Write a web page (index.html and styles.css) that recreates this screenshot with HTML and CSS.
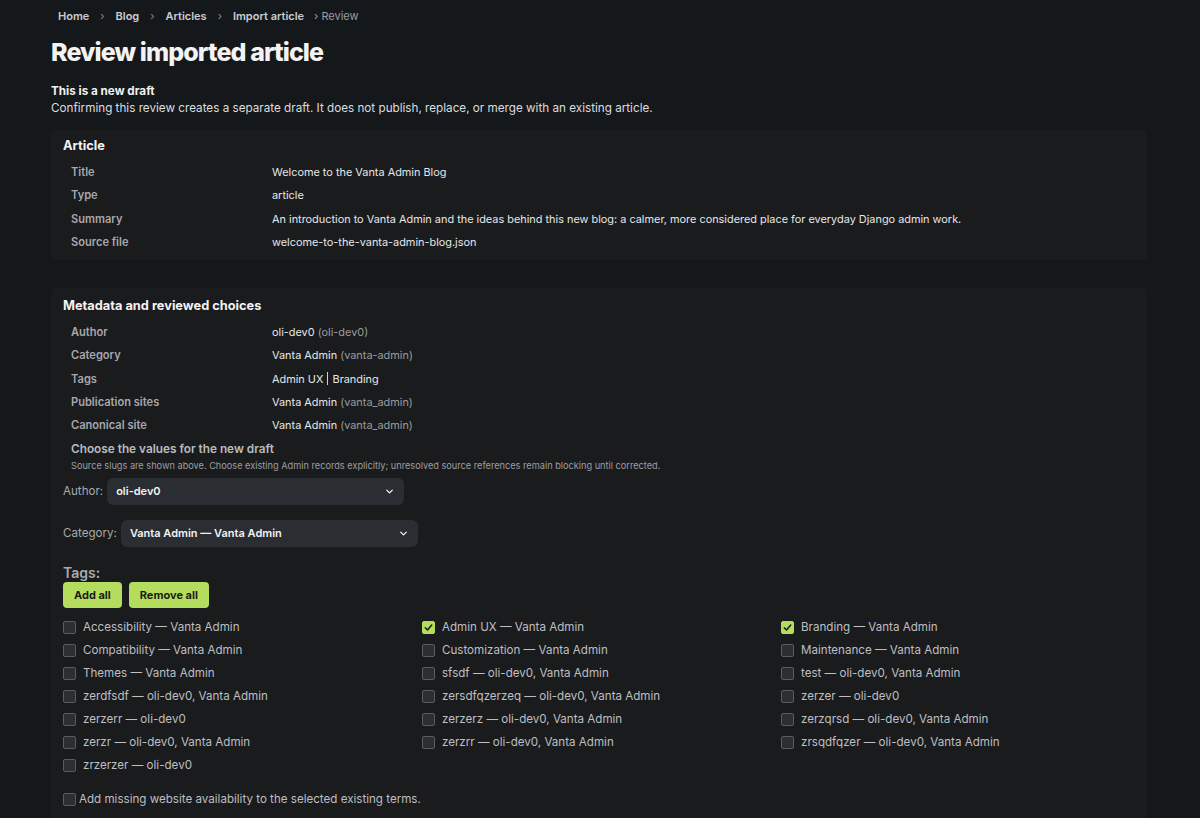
FILE: index.html
```html
<!DOCTYPE html>
<html lang="en">
<head>
<meta charset="utf-8">
<title>Review imported article</title>
<link rel="stylesheet" href="styles.css">
</head>
<body>
<nav class="crumbs">
  <a href="#">Home</a><span class="sep">›</span><a href="#">Blog</a><span class="sep">›</span><a href="#">Articles</a><span class="sep">›</span><a href="#">Import article</a><span class="current">› Review</span>
</nav>
<h1 class="title">Review imported article</h1>
<div class="notice">
  <p class="notice-head">This is a new draft</p>
  <p class="notice-text">Confirming this review creates a separate draft. It does not publish, replace, or merge with an existing article.</p>
</div>

<section class="panel">
  <h2 class="panel-head">Article</h2>
  <dl class="rows">
    <dt>Title</dt><dd>Welcome to the Vanta Admin Blog</dd>
    <dt>Type</dt><dd>article</dd>
    <dt>Summary</dt><dd>An introduction to Vanta Admin and the ideas behind this new blog: a calmer, more considered place for everyday Django admin work.</dd>
    <dt>Source file</dt><dd>welcome-to-the-vanta-admin-blog.json</dd>
  </dl>
</section>

<section class="panel panel-form">
  <h2 class="panel-head">Metadata and reviewed choices</h2>
  <dl class="rows">
    <dt>Author</dt><dd>oli-dev0 <span class="muted">(oli-dev0)</span></dd>
    <dt>Category</dt><dd>Vanta Admin <span class="muted">(vanta-admin)</span></dd>
    <dt>Tags</dt><dd>Admin UX <span class="bar"></span> Branding</dd>
    <dt>Publication sites</dt><dd>Vanta Admin <span class="muted">(vanta_admin)</span></dd>
    <dt>Canonical site</dt><dd>Vanta Admin <span class="muted">(vanta_admin)</span></dd>
  </dl>
  <div class="choose">
    <p class="choose-head">Choose the values for the new draft</p>
    <p class="choose-help">Source slugs are shown above. Choose existing Admin records explicitly; unresolved source references remain blocking until corrected.</p>
  </div>
  <div class="field">
    <label class="field-label">Author:</label>
    <div class="select"><span>oli-dev0</span><svg class="chev" viewBox="0 0 10 6" width="7" height="5"><path d="M1 1l4 4 4-4" fill="none" stroke="#fff" stroke-width="1.7" stroke-linecap="round" stroke-linejoin="round"/></svg></div>
  </div>
  <div class="field">
    <label class="field-label">Category:</label>
    <div class="select"><span>Vanta Admin — Vanta Admin</span><svg class="chev" viewBox="0 0 10 6" width="7" height="5"><path d="M1 1l4 4 4-4" fill="none" stroke="#fff" stroke-width="1.7" stroke-linecap="round" stroke-linejoin="round"/></svg></div>
  </div>
  <div class="tags">
    <p class="tags-label">Tags:</p>
    <div class="buttons">
      <button class="btn">Add all</button>
      <button class="btn">Remove all</button>
    </div>
    <ul class="checks">
      <li><span class="box"></span>Accessibility — Vanta Admin</li>
      <li><span class="box on"><svg viewBox="0 0 12 12" width="11" height="11"><path d="M2.5 6.3l2.4 2.4 4.6-5.4" fill="none" stroke="#1b1d17" stroke-width="1.7" stroke-linecap="round" stroke-linejoin="round"/></svg></span>Admin UX — Vanta Admin</li>
      <li><span class="box on"><svg viewBox="0 0 12 12" width="11" height="11"><path d="M2.5 6.3l2.4 2.4 4.6-5.4" fill="none" stroke="#1b1d17" stroke-width="1.7" stroke-linecap="round" stroke-linejoin="round"/></svg></span>Branding — Vanta Admin</li>
      <li><span class="box"></span>Compatibility — Vanta Admin</li>
      <li><span class="box"></span>Customization — Vanta Admin</li>
      <li><span class="box"></span>Maintenance — Vanta Admin</li>
      <li><span class="box"></span>Themes — Vanta Admin</li>
      <li><span class="box"></span>sfsdf — oli-dev0, Vanta Admin</li>
      <li><span class="box"></span>test — oli-dev0, Vanta Admin</li>
      <li><span class="box"></span>zerdfsdf — oli-dev0, Vanta Admin</li>
      <li><span class="box"></span>zersdfqzerzeq — oli-dev0, Vanta Admin</li>
      <li><span class="box"></span>zerzer — oli-dev0</li>
      <li><span class="box"></span>zerzerr — oli-dev0</li>
      <li><span class="box"></span>zerzerz — oli-dev0, Vanta Admin</li>
      <li><span class="box"></span>zerzqrsd — oli-dev0, Vanta Admin</li>
      <li><span class="box"></span>zerzr — oli-dev0, Vanta Admin</li>
      <li><span class="box"></span>zerzrr — oli-dev0, Vanta Admin</li>
      <li><span class="box"></span>zrsqdfqzer — oli-dev0, Vanta Admin</li>
      <li><span class="box"></span>zrzerzer — oli-dev0</li>
    </ul>
    <p class="missing"><span class="box"></span>Add missing website availability to the selected existing terms.</p>
  </div>
</section>
</body>
</html>
```

FILE: styles.css
```css
* { box-sizing: border-box; }
html, body { background: #15181b; }
body {
  margin: 0;
  padding: 0 53px 40px 51px;
  font-family: Inter, "Noto Sans", "Liberation Sans", sans-serif;
  color: #e4e5e6;
}
p, h1, h2, dl, dd, ul { margin: 0; padding: 0; }

.crumbs {
  padding: 8px 0 0 7px;
  font-size: 11px;
  line-height: 16px;
  font-weight: 600;
}
.crumbs a { color: #cbccce; text-decoration: none; }
.crumbs .sep { color: #8a8c8f; font-weight: 400; margin: 0 11px; }
.crumbs .current { color: #9a9c9f; font-weight: 400; margin-left: 10px; }

.title {
  margin-top: 12px;
  font-size: 25px;
  line-height: 32px;
  font-weight: 800;
  letter-spacing: -0.9px;
  color: #f3f3f3;
}

.notice { margin-top: 15px; }
.notice-head { font-size: 11.7px; line-height: 17px; font-weight: 700; color: #f0f0f0; }
.notice-text { font-size: 11.7px; line-height: 17px; color: #dcdddf; }

.panel {
  margin-top: 12px;
  background: #1a1b1d;
  border-radius: 4px;
  padding: 8px 12px 6px;
}
.panel-form { margin-top: 28px; padding-top: 9px; padding-bottom: 20px; }
.panel-head {
  font-size: 12.8px;
  line-height: 17px;
  font-weight: 700;
  color: #f2f2f2;
}
.panel-form .panel-head { line-height: 18px; }

.rows {
  margin-top: 7px;
  display: grid;
  grid-template-columns: 201px 1fr;
  padding-left: 8px;
}
.panel-form .rows { margin-top: 6px; }
.rows dt, .rows dd {
  font-size: 11px;
  line-height: 15px;
  padding: 4px 0 4.3px;
}
.rows dt { font-weight: 600; color: #a7a9ac; font-size: 11.1px; }
.rows dd { color: #e6e7e8; font-size: 10.9px; }
.muted { color: #9a9c9f; }
.bar {
  display: inline-block;
  width: 1px;
  height: 13px;
  background: #cfd0d2;
  vertical-align: -2px;
  margin: 0 1px;
}

.choose { padding-left: 8px; margin-top: 3px; }
.choose-head { font-size: 11.8px; line-height: 17px; font-weight: 600; color: #b9bbbe; }
.choose-help { margin-top: 1px; font-size: 9.2px; line-height: 13px; color: #9c9ea1; }

.field {
  display: flex;
  align-items: center;
  gap: 4px;
  margin-top: 6px;
}
.field + .field { margin-top: 15px; }
.field-label { font-size: 11.6px; color: #a8aaad; }
.select {
  width: 297px;
  height: 27px;
  background: #2a2d31;
  border-radius: 6px;
  display: flex;
  align-items: center;
  justify-content: space-between;
  padding: 0 11px 0 9px;
  font-size: 11px;
  font-weight: 600;
  color: #f2f2f2;
}
.chev { display: block; }

.tags { margin-top: 17px; }
.tags-label { font-size: 14px; line-height: 18px; font-weight: 600; color: #a9abae; }
.buttons { display: flex; gap: 7px; }
.btn {
  height: 26px;
  padding: 0 11px;
  border: none;
  border-radius: 4px;
  background: #b4dd5e;
  color: #1a1c16;
  font-family: inherit;
  font-size: 11px;
  font-weight: 700;
}

.checks {
  list-style: none;
  margin-top: 8px;
  display: grid;
  grid-template-columns: repeat(3, 359px);
}
.checks li {
  display: flex;
  align-items: center;
  height: 23px;
  font-size: 11.6px;
  color: #bdbfc2;
}
.box {
  flex: none;
  width: 13px;
  height: 13px;
  margin-right: 7px;
  border: 1px solid #5a5c60;
  border-radius: 2px;
  background: #2c2e31;
  display: inline-flex;
  align-items: center;
  justify-content: center;
}
.box.on { background: #b4dd5e; border-color: #b4dd5e; }

.missing {
  display: flex;
  align-items: center;
  margin-top: 14px;
  line-height: 17px;
  font-size: 11.6px;
  color: #bdbfc2;
}
.missing .box { margin-right: 3px; }
```
